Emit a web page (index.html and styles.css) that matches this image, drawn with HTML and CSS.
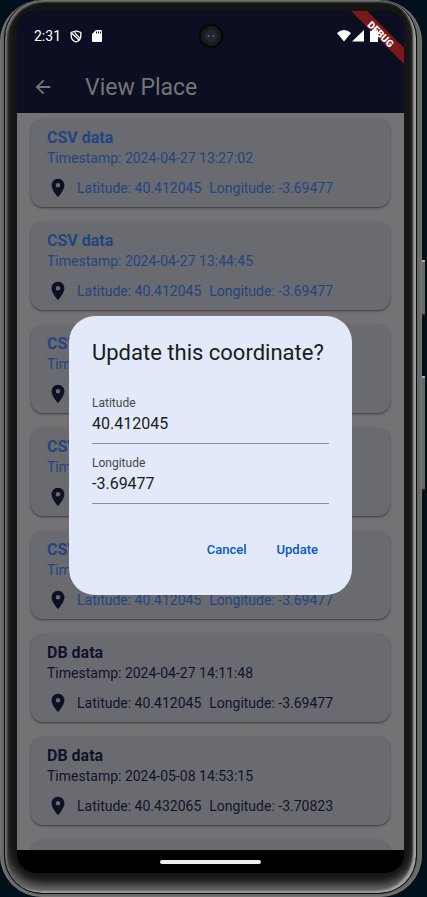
FILE: index.html
```html
<!DOCTYPE html>
<html lang="en">
<head>
<meta charset="utf-8">
<meta name="viewport" content="width=device-width, initial-scale=1">
<title>View Place</title>
<link rel="stylesheet" href="styles.css">
</head>
<body>
<svg class="defs" aria-hidden="true">
  <symbol id="pin" viewBox="0 0 24 24"><path fill-rule="evenodd" d="M12 2C8.130 2 5 5.130 5 9c0 5.250 7 13 7 13s7-7.750 7-13c0-3.870-3.130-7-7-7zm0 9.500a2.500 2.500 0 1 1 0-5 2.500 2.500 0 0 1 0 5z"/></symbol>
</svg>
<div class="phone">
  <span class="side-button power"></span>
  <span class="side-button volume"></span>
  <div class="rim">
    <div class="screen">
      <header class="top">
        <div class="status">
          <time>2:31</time>
          <svg class="shield" viewBox="0 0 12 13" aria-hidden="true"><path d="M6 1 1.200 2.500v3.500c0 3 2 5 4.800 6 2.800-1 4.800-3 4.800-6V2.500z"/><path d="M1.500 3 9.500 10.500M5 2c0 3.500 3.500 3 4.500 6.500"/></svg>
          <svg class="sd" viewBox="0 0 10 12" aria-hidden="true"><path fill-rule="evenodd" d="M4 0h5q1 0 1 1v10q0 1-1 1H1q-1 0-1-1V4zM4 1.500v2h1v-2zM6 1.500v2h1v-2zM8 1.500v2h1v-2z"/></svg>
          <span class="spacer"></span>
          <svg class="signals" viewBox="0 0 42 14" aria-hidden="true"><path d="M0 4Q7-2 14 4L7 12.500z"/><path d="M15 12.500h12V1z"/><path d="M33 2h2V1h4v1h2v11h-8z"/></svg>
        </div>
        <div class="bar">
          <button class="back" type="button" aria-label="Back"><svg viewBox="0 0 24 24"><path d="M20 11H7.830l5.590-5.590L12 4l-8 8 8 8 1.410-1.410L7.830 13H20z"/></svg></button>
          <h1>View Place</h1>
        </div>
      </header>
      <main class="list">
        <article class="card csv"><h2>CSV data</h2><p>Timestamp: 2024-04-27 13:27:02</p><div class="coords"><svg><use href="#pin"/></svg><span>Latitude: 40.412045</span><span>Longitude: -3.69477</span></div></article>
        <article class="card csv"><h2>CSV data</h2><p>Timestamp: 2024-04-27 13:44:45</p><div class="coords"><svg><use href="#pin"/></svg><span>Latitude: 40.412045</span><span>Longitude: -3.69477</span></div></article>
        <article class="card csv"><h2>CSV data</h2><p>Timestamp</p><div class="coords"><svg><use href="#pin"/></svg></div></article>
        <article class="card csv"><h2>CSV data</h2><p>Timestamp</p><div class="coords"><svg><use href="#pin"/></svg></div></article>
        <article class="card csv"><h2>CSV data</h2><p>Timestamp</p><div class="coords"><svg><use href="#pin"/></svg><span>Latitude: 40.412045</span><span>Longitude: -3.69477</span></div></article>
        <article class="card"><h2>DB data</h2><p>Timestamp: 2024-04-27 14:11:48</p><div class="coords"><svg><use href="#pin"/></svg><span>Latitude: 40.412045</span><span>Longitude: -3.69477</span></div></article>
        <article class="card"><h2>DB data</h2><p>Timestamp: 2024-05-08 14:53:15</p><div class="coords"><svg><use href="#pin"/></svg><span>Latitude: 40.432065</span><span>Longitude: -3.70823</span></div></article>
        <article class="card"></article>
      </main>
      <footer class="nav"><span></span></footer>

      <svg class="debug" viewBox="0 0 54 54" aria-hidden="true"><path d="M1 0h16l37 37v16z"/><text x="31" y="27" transform="rotate(45 31 23)">DEBUG</text></svg>
      <svg class="camera" viewBox="0 0 26 26" aria-hidden="true"><circle cx="13" cy="13" r="12.500" fill="#080808"/><circle cx="13" cy="13" r="10" fill="#1b1b1c"/><circle cx="13" cy="13" r="6.500" fill="#202630"/><circle cx="10.500" cy="13" r="1" fill="#3c8580"/><circle cx="15.500" cy="13" r="1" fill="#4667aa"/></svg>

      <div class="modal">
        <form class="dialog" role="dialog" aria-labelledby="dialog-title">
          <h2 id="dialog-title">Update this coordinate?</h2>
          <div class="field"><label for="lat">Latitude</label><input id="lat" type="text" value="40.412045"></div>
          <div class="field"><label for="lng">Longitude</label><input id="lng" type="text" value="-3.69477"></div>
          <div class="actions"><button type="button">Cancel</button><button type="button">Update</button></div>
        </form>
      </div>
    </div>
  </div>
</div>
</body>
</html>
```
FILE: styles.css
```css
* { box-sizing: border-box; }
body {
  margin: 0;
  background: #02101b;
  font-family: Roboto, "Liberation Sans", sans-serif;
}
h1, h2, p { margin: 0; font-weight: 400; }
button, input { font: inherit; background: none; border: 0; padding: 0; }
.defs { position: absolute; width: 0; height: 0; }

.phone {
  position: relative;
  height: 100vh;
  margin-right: 5px;
  padding: 0 5px 3px 4px;
  border-radius: 42px;
  background: #686867;
  box-shadow: inset 0 0 2px #989898;
}
.rim {
  height: 100%;
  padding: 11px 12px 20px 12px;
  border: 1px solid #090909;
  border-top-width: 0;
  border-radius: 38px;
  background: #151515;
  box-shadow: inset -3px -2px 2px #a0a0a0, inset 2px 2px 2px #777, inset 0 -9px 8px #686868;
}
.side-button {
  position: absolute;
  left: 100%;
  width: 3px;
  background: #666;
  border-top: 2px solid #aaa;
  border-bottom: 2px solid #222;
}
.power { top: 260px; height: 56px; }
.volume { top: 376px; height: 115px; }

.screen {
  position: relative;
  height: 100%;
  display: flex;
  flex-direction: column;
  border-radius: 19px;
  overflow: hidden;
  background: #000;
}
.top { background: #0b0f21; color: #757575; }
.status {
  position: relative;
  z-index: 2;
  height: 50px;
  display: flex;
  align-items: center;
  padding: 0 25px 0 17px;
  color: #fff;
  font-size: 14px;
}
.status svg { fill: #fff; }
.status .shield { width: 12px; height: 13px; margin-left: 9px; fill: none; stroke: #fff; stroke-width: 1.300; }
.status .sd { width: 10px; height: 12px; margin-left: 10px; }
.signals { width: 42px; height: 14px; }
.spacer { flex: 1; }
.bar { height: 52px; display: flex; align-items: center; padding-left: 15px; }
.back { width: 22px; height: 22px; }
.back svg { display: block; fill: #757575; }
.bar h1 { margin-left: 31px; font-size: 23px; }

.list {
  flex: 1;
  min-height: 0;
  overflow: hidden;
  display: flex;
  flex-direction: column;
  gap: 15px;
  padding: 6px 14px 0;
  background: #757275;
}
.card {
  flex: none;
  min-height: 88px;
  padding: 8px 16px 7px;
  border-radius: 12px;
  background: #696b71;
  box-shadow: 0 1px 3px #0005, 0 1px 1px #0003;
  color: #12132a;
  font-size: 14px;
  line-height: 21px;
}
.csv { color: #23457f; }
.card h2 { font-size: 16px; font-weight: 700; }
.card p { white-space: nowrap; }
.coords { display: flex; align-items: center; height: 22px; margin-top: 8px; gap: 8px; white-space: nowrap; }
.coords svg { flex: none; width: 22px; height: 22px; fill: #0e1024; }

.nav { height: 23px; display: flex; justify-content: center; align-items: center; }
.nav span { width: 101px; height: 4px; border-radius: 2px; background: #eee; }

.debug { position: absolute; top: 0; right: 0; width: 54px; height: 54px; fill: #7b181b; }
.debug text { fill: #fff; font-size: 10px; font-weight: 900; text-anchor: middle; }
.camera { position: absolute; top: 12px; left: 50%; width: 26px; height: 26px; transform: translateX(-50%); }

.modal {
  position: absolute;
  inset: 50px 0 23px;
  z-index: 3;
  display: flex;
  align-items: center;
  padding: 0 52px;
}
.dialog {
  flex: 1;
  min-width: 0;
  padding: 22px 23px 27px;
  border-radius: 26px;
  background: #e2e9f8;
  color: #191c20;
}
.dialog h2 { margin-bottom: 16px; font-size: 22px; line-height: 30px; white-space: nowrap; }
.field { padding-top: 11px; border-bottom: 1px solid #8a8f99; }
.field label { display: block; font-size: 12px; line-height: 16px; color: #43474e; }
.field input { display: block; width: 100%; height: 24px; margin-bottom: 8px; font-size: 16px; color: inherit; outline: 0; }
.actions { display: flex; justify-content: flex-end; gap: 8px; margin-top: 26px; }
.actions button { height: 38px; padding: 0 11px; font-size: 13px; font-weight: 500; color: #0559bd; }
```
